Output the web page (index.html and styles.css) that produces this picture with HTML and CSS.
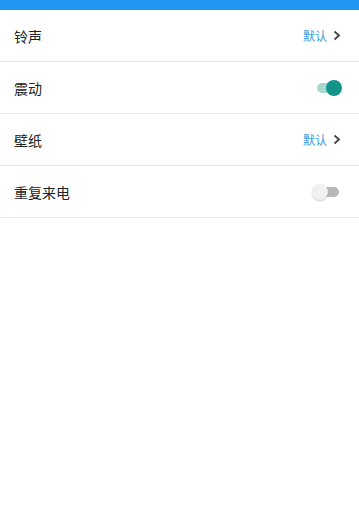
FILE: index.html
```html
<!DOCTYPE html>
<html lang="zh-CN">
<head>
  <meta charset="UTF-8">
  <title>来电设置</title>
  <link rel="stylesheet" href="styles.css">
</head>
<body>

<div class="topbar"></div>

<div class="list">
  <div class="row">
    <span class="label">铃声</span>
    <span class="extra">
      <span class="value">默认</span>
      <svg class="chevron" width="8" height="11" viewBox="0 0 8 11"><path d="M1.5 1.5 L6 5.5 L1.5 9.5" fill="none" stroke="#444" stroke-width="1.8"/></svg>
    </span>
  </div>
  <div class="row">
    <span class="label">震动</span>
    <span class="switch on"><span class="thumb"></span></span>
  </div>
  <div class="row">
    <span class="label">壁纸</span>
    <span class="extra">
      <span class="value">默认</span>
      <svg class="chevron" width="8" height="11" viewBox="0 0 8 11"><path d="M1.5 1.5 L6 5.5 L1.5 9.5" fill="none" stroke="#444" stroke-width="1.8"/></svg>
    </span>
  </div>
  <div class="row">
    <span class="label">重复来电</span>
    <span class="switch"><span class="thumb"></span></span>
  </div>
</div>

</body>
</html>
```

FILE: styles.css
```css
body {
  margin: 0;
  background: #fff;
  font-family: "Noto Sans CJK SC", "Noto Sans", sans-serif;
}
.topbar {
  height: 10px;
  background: #2196f3;
}
.row {
  height: 51px;
  display: flex;
  align-items: center;
  justify-content: space-between;
  padding: 0 18px 0 14px;
  border-bottom: 1px solid #e6e6e6;
}
.label {
  font-size: 14px;
  color: #222;
}
.extra {
  display: flex;
  align-items: center;
  gap: 6px;
}
.value {
  font-size: 12px;
  color: #3b9ad9;
}
.chevron { display: block; }
.switch {
  position: relative;
  width: 22px;
  height: 10px;
  border-radius: 5px;
  background: #b9b9b9;
  margin-right: 2px;
}
.switch .thumb {
  position: absolute;
  top: -3px;
  left: -5px;
  width: 16px;
  height: 16px;
  border-radius: 50%;
  background: #f1f1f1;
  box-shadow: 0 1px 2px rgba(0,0,0,0.2);
}
.switch.on { background: #a6d8d2; }
.switch.on .thumb {
  left: auto;
  right: -3px;
  background: #139488;
  box-shadow: none;
}
```
